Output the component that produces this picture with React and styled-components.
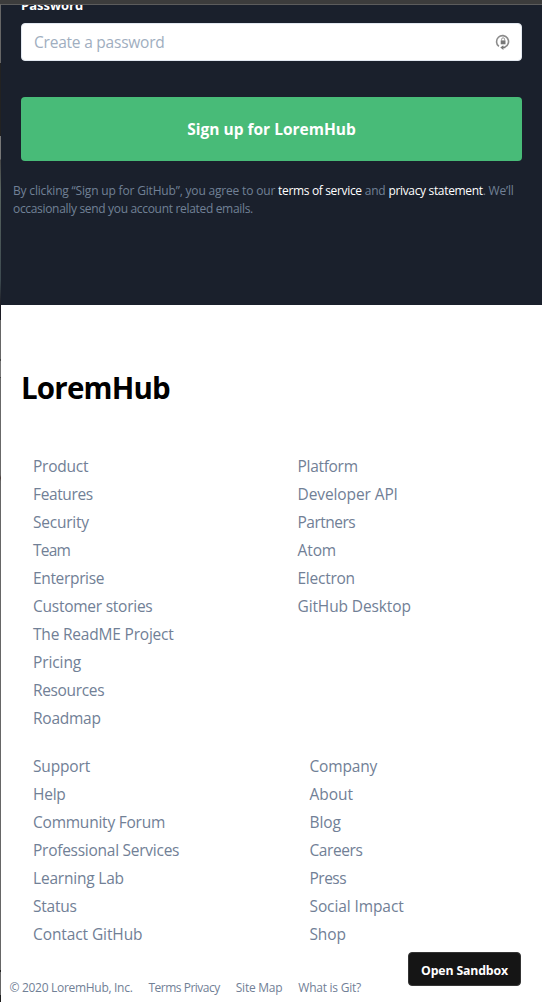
import React from "react";
import styled, { createGlobalStyle } from "styled-components";

const GlobalStyle = createGlobalStyle`
  * { box-sizing: border-box; }
  html, body { margin: 0; padding: 0; }
  body {
    background: #fff;
    font-family: "Open Sans", "Noto Sans", sans-serif;
    overflow: hidden;
  }
  a { color: inherit; text-decoration: none; }
`;

const Window = styled.div`
  display: flex;
  width: 542px;
  height: 1002px;
  overflow: hidden;
`;

const Edge = styled.div`
  flex: 0 0 1px;
  background: linear-gradient(
    #3c3c3c 0 4px, #666 4px 63px, #222 63px 136px, #777 136px 159px,
    #454545 160px, #59645f 190px, #3d4a50 280px, #1c1c24 305px 320px,
    #666 320px 359px, #444 359px 361px, #777 361px 377px, #444 377px 378px,
    #686868 378px 475px, #4a3a35 478px, #666 481px 970px, #222 970px 972px,
    #666 972px 995px, #1e1e1e 995px
  );
`;

const Page = styled.div`
  flex: 1;
  display: flex;
  flex-direction: column;
  min-width: 0;
`;

const TopBar = styled.div`
  flex: 0 0 5px;
  background: #3c3c3c;
  border-bottom: 1px solid #5c5c5c;
`;

const Signup = styled.section`
  flex: 0 0 300px;
  background: #1a202c;
  overflow: hidden;
  padding: 0 20px;
`;

const Label = styled.label`
  display: block;
  height: 20px;
  margin-top: -10px;
  font-size: 13px;
  line-height: 20px;
  font-weight: 700;
  color: #fff;
`;

const Field = styled.div`
  display: flex;
  align-items: center;
  justify-content: space-between;
  height: 38px;
  margin-top: 8px;
  padding: 0 10px 0 12px;
  background: #fff;
  border: 1px solid #e2e8f0;
  border-radius: 4px;
  color: #a0aec0;
  font-size: 15.5px;
  letter-spacing: -0.22px;
`;

const SubmitButton = styled.button`
  display: block;
  width: 100%;
  height: 64px;
  margin: 36px 0 0;
  padding: 0 0 1px;
  border: 0;
  border-radius: 4px;
  background: #48bb78;
  color: #fff;
  font: 700 15.5px "Open Sans", sans-serif;
`;

const Terms = styled.p`
  margin: 21px -8px 0;
  font-size: 12px;
  line-height: 18px;
  color: #718096;
  white-space: nowrap;
  letter-spacing: -0.18px;
  a { color: #fff; letter-spacing: -0.34px; }
`;

const Text = styled.span`
  letter-spacing: ${(p) => p.$track}px;
`;

const Footer = styled.footer`
  flex: 1;
  display: flex;
  flex-direction: column;
`;

const Brand = styled.h2`
  margin: 62px 0 0 20px;
  font-size: 29.5px;
  line-height: 42px;
  font-weight: 700;
  letter-spacing: -0.8px;
  color: #000;
`;

const LinkGrid = styled.div`
  display: grid;
  grid-template-columns: ${(p) => p.$first}px 1fr;
  margin: ${(p) => p.$top}px 0 0 32px;
`;

const LinkList = styled.ul`
  list-style: none;
  margin: 0;
  padding: 0;
`;

const LinkItem = styled.li`
  height: 28px;
  font-size: 15.5px;
  line-height: 28px;
  letter-spacing: ${(p) => p.$track}px;
  color: #718096;
  white-space: nowrap;
`;

const Legal = styled.div`
  display: flex;
  gap: 16px;
  margin: 31px 0 0 8.5px;
  font-size: 12px;
  line-height: 18px;
  color: #718096;
  white-space: nowrap;
`;

const SandboxButton = styled.button`
  position: fixed;
  left: 408px;
  top: 952px;
  width: 113px;
  height: 34px;
  padding: 2px 0 0;
  border: 1px solid #343434;
  border-radius: 4px;
  background: #151515;
  color: #fff;
  font: 700 12.3px "Open Sans", sans-serif;
  letter-spacing: -0.15px;
  white-space: nowrap;
`;

function LockIcon() {
  return (
    <svg width="16" height="18" viewBox="0 0 16 18" fill="none">
      <path d="M3.9 13.4A6 6 0 1 1 10 14.1" stroke="#8a8a8a" strokeWidth="1.6" />
      <path d="M5.7 7.4h4.8v3.9H5.7z" fill="#777" />
      <path d="M6.6 7.6V6.3a1.5 1.5 0 0 1 3 0v1.3" stroke="#888" strokeWidth="0.9" />
      <path d="M5.3 14.4 8.3 12.2v1.4h2v1.6H8.4v1.8z" fill="#777" />
    </svg>
  );
}

const product = [
  ["Product", -0.25],
  ["Features", -0.37],
  ["Security", -0.22],
  ["Team", -0.8],
  ["Enterprise", -0.34],
  ["Customer stories", -0.25],
  ["The ReadME Project", -0.2],
  ["Pricing", -0.1],
  ["Resources", -0.35],
  ["Roadmap", -0.25],
];
const platform = [
  ["Platform", -0.3],
  ["Developer API", -0.1],
  ["Partners", -0.5],
  ["Atom", -0.1],
  ["Electron", -0.25],
  ["GitHub Desktop", -0.12],
];
const support = [
  ["Support", -0.15],
  ["Help", -0.25],
  ["Community Forum", -0.23],
  ["Professional Services", -0.26],
  ["Learning Lab", -0.2],
  ["Status", -0.25],
  ["Contact GitHub", -0.1],
];
const company = [
  ["Company", -0.17],
  ["About", 0],
  ["Blog", -0.1],
  ["Careers", -0.4],
  ["Press", -0.5],
  ["Social Impact", -0.1],
  ["Shop", -0.15],
];

function Links({ items }) {
  return (
    <LinkList>
      {items.map(([label, track]) => (
        <LinkItem key={label} $track={track}><a href="#">{label}</a></LinkItem>
      ))}
    </LinkList>
  );
}

export default function App() {
  return (
    <Window>
      <GlobalStyle />
      <Edge />
      <Page>
        <TopBar />
        <Signup>
          <Label>Password</Label>
          <Field>
            <span>Create a password</span>
            <LockIcon />
          </Field>
          <SubmitButton>Sign up for LoremHub</SubmitButton>
          <Terms>
            By clicking “Sign up for GitHub”, you agree to our <a href="#">terms of service</a> and <a href="#">privacy statement</a>. We’ll
            <br />
            <Text $track={-0.32}>occasionally send you account related emails.</Text>
          </Terms>
        </Signup>
        <Footer>
          <Brand>LoremHub</Brand>
          <LinkGrid $first={264.5} $top={43}>
            <Links items={product} />
            <Links items={platform} />
          </LinkGrid>
          <LinkGrid $first={276.5} $top={20}>
            <Links items={support} />
            <Links items={company} />
          </LinkGrid>
          <Legal>
            <Text $track={-0.3}>© 2020 LoremHub, Inc.</Text>
            <Text as="a" href="#" $track={-0.5}>Terms Privacy</Text>
            <Text as="a" href="#" $track={-0.25}>Site Map</Text>
            <Text as="a" href="#" $track={-0.25}>What is Git?</Text>
          </Legal>
        </Footer>
      </Page>
      <SandboxButton>Open Sandbox</SandboxButton>
    </Window>
  );
}
